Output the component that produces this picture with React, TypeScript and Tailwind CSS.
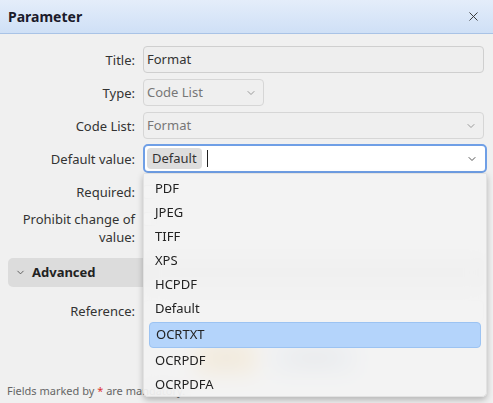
import { X, ChevronDown } from "lucide-react";

const options = ["PDF", "JPEG", "TIFF", "XPS", "HCPDF", "Default", "OCRTXT", "OCRPDF", "OCRPDFA"];

function Label({ children }: { children: React.ReactNode }) {
  return <div className="w-[135px] shrink-0 text-right text-[13px] leading-[18px] text-[#333]">{children}</div>;
}

export default function App() {
  return (
    <div
      className="relative h-[403px] w-[493px] overflow-hidden bg-[#f0f0f0]"
      style={{ fontFamily: '"Noto Sans", "Open Sans", sans-serif' }}
    >
      {/* header */}
      <div className="flex h-[34px] items-center justify-between border-b border-[#a9c3e6] bg-gradient-to-b from-[#e4edfa] to-[#cfe0f6] pl-[8px] pr-[12px]">
        <span className="text-[14px] font-bold text-[#1b1b2b]">Parameter</span>
        <X className="h-[15px] w-[15px] text-[#333]" strokeWidth={1.5} />
      </div>

      {/* form */}
      <div className="flex flex-col pr-[9px] pt-[12px]">
        <div className="flex h-[27px] items-center gap-[8px]">
          <Label>Title:</Label>
          <div className="flex h-[27px] flex-1 items-center rounded-[4px] border border-[#cfcfcf] bg-[#eeeeee] px-[3px] text-[13px] text-[#333]">
            Format
          </div>
        </div>

        <div className="mt-[6px] flex h-[27px] items-center gap-[8px]">
          <Label>Type:</Label>
          <div className="flex h-[27px] w-[121px] items-center justify-between rounded-[4px] border border-[#d6d6d6] bg-[#efefef] pl-[3px] pr-[6px] text-[13px] text-[#777]">
            Code List
            <ChevronDown className="h-[12px] w-[12px] text-[#999]" />
          </div>
        </div>

        <div className="mt-[6px] flex h-[27px] items-center gap-[8px]">
          <Label>Code List:</Label>
          <div className="flex h-[27px] flex-1 items-center justify-between rounded-[4px] border border-[#d6d6d6] bg-[#efefef] pl-[3px] pr-[6px] text-[13px] text-[#777]">
            Format
            <ChevronDown className="h-[12px] w-[12px] text-[#999]" />
          </div>
        </div>

        <div className="mt-[5px] flex h-[29px] items-center gap-[8px]">
          <Label>Default value:</Label>
          <div className="-mr-[3px] flex h-[29px] flex-1 items-center justify-between rounded-[5px] border-2 border-[#6f9fe6] bg-white pl-[2px] pr-[7px]">
            <div className="flex items-center">
              <span className="rounded-[4px] bg-[#dddddd] px-[5px] py-[2px] text-[13px] leading-[17px] text-[#333]">Default</span>
              <span className="ml-[5px] h-[17px] w-px bg-[#222]" />
            </div>
            <ChevronDown className="h-[12px] w-[12px] text-[#555]" />
          </div>
        </div>

        <div className="mt-[9px] flex h-[20px] items-center gap-[8px]">
          <Label>Required:</Label>
          <div className="h-[14px] w-[14px] rounded-[3px] border border-[#bbb] bg-white" />
        </div>

        <div className="mt-[8px] flex items-start gap-[8px]">
          <Label>
            Prohibit change of
            <br />
            value:
          </Label>
          <div className="mt-[2px] h-[14px] w-[14px] rounded-[3px] border border-[#bbb] bg-white" />
        </div>

        <div className="ml-[8px] mt-[12px] flex h-[29px] items-center gap-[6px] rounded-[5px] bg-[#dcdcdc] pl-[7px]">
          <ChevronDown className="h-[11px] w-[11px] text-[#555]" />
          <span className="text-[13px] font-bold text-[#222]">Advanced</span>
        </div>

        <div className="mt-[13px] flex h-[22px] items-center gap-[8px]">
          <Label>Reference:</Label>
          <div className="h-[22px] flex-1 rounded-[4px] border border-[#d6d6d6] bg-[#efefef]" />
        </div>

        <div className="mt-[20px] flex gap-[16px] pl-[196px]">
          <div className="flex h-[32px] w-[60px] items-center justify-center rounded-[4px] bg-[#f4c46a] text-[13px] text-[#333]">OK</div>
          <div className="flex h-[32px] w-[84px] items-center justify-center rounded-[4px] bg-[#c9d6e6] text-[13px] text-[#333]">Cancel</div>
        </div>
      </div>

      {/* footer */}
      <div className="absolute bottom-[4px] left-[7px] text-[11px] text-[#666]">
        Fields marked by <span className="text-[#d33]">*</span> are mandatory.
      </div>

      {/* dropdown */}
      <div className="absolute left-[143px] top-[173px] h-[224px] w-[344px] rounded-b-[5px] border border-[#e2e2e2] bg-[#f3f3f3]/85 pt-[3px] shadow-[0_3px_6px_rgba(0,0,0,0.25)] backdrop-blur-[10px]">
        {options.map((o) =>
          o === "OCRTXT" ? (
            <div
              key={o}
              className="mx-[5px] my-[1px] flex h-[26px] items-center rounded-[4px] border border-[#9cc3f2] bg-[#b4d4fb] pl-[6px] text-[13px] text-[#222]"
            >
              {o}
            </div>
          ) : (
            <div key={o} className="flex h-[24px] items-center pl-[11px] text-[13px] text-[#222]">
              {o}
            </div>
          )
        )}
      </div>
    </div>
  );
}
